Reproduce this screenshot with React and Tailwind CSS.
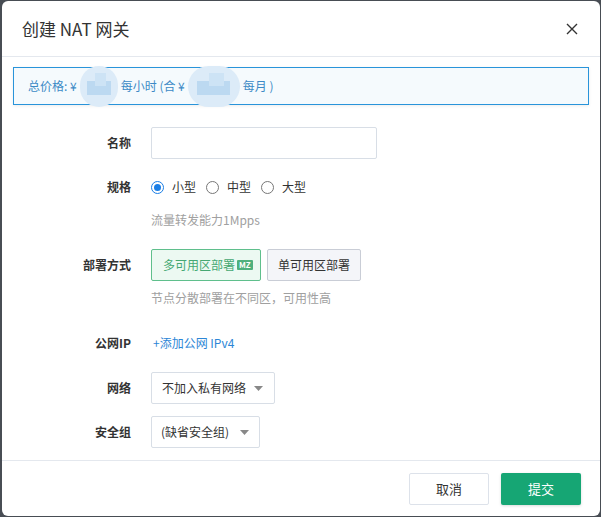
import React from 'react';

const font = { fontFamily: '"Noto Sans CJK SC", "Noto Sans", sans-serif' };

const Blob = ({ w }) => (
    <span className={`relative inline-block align-middle h-[41px] -my-[12px] mx-[3px] rounded-full bg-[#dcebf8] ${w}`}>
        <span className="absolute left-[18%] right-[18%] top-[38%] bottom-[28%] bg-[#bcd9f1]" />
        <span className="absolute left-[40%] right-[30%] top-[18%] bottom-[50%] bg-[#cde3f5]" />
    </span>
);

const Radio = ({ checked, label }) => (
    <label className="flex items-center gap-[8px] text-[12px] text-[#333]">
        <span className={`w-[13px] h-[13px] rounded-full border flex items-center justify-center ${checked ? 'border-[#1a7ee6]' : 'border-[#777]'}`}>
            {checked && <span className="w-[7px] h-[7px] rounded-full bg-[#1a7ee6]" />}
        </span>
        {label}
    </label>
);

const Caret = () => (
    <svg width="9" height="5" viewBox="0 0 9 5"><path d="M0 0h9L4.5 5z" fill="#888" /></svg>
);

const Row = ({ label, className = '', children }) => (
    <div className={`flex items-center ${className}`}>
        <div className="w-[129px] text-right text-[12px] font-bold text-[#333]">{label}</div>
        <div className="ml-[20px] flex items-center">{children}</div>
    </div>
);

const Hint = ({ className = '', children }) => (
    <div className={`ml-[149px] text-[12px] leading-[18px] text-[#a0a0a0] ${className}`}>{children}</div>
);

export default function App() {
    return (
        <div className="w-[601px] h-[517px] bg-[#484d54] pt-[1px] pl-[2px] overflow-hidden" style={font}>
            <div className="w-[598px] h-[515px] bg-white rounded-[6px] flex flex-col">
                <div className="h-[56px] flex items-center justify-between pl-[20px] pr-[20px] border-b border-[#e4e8ee]">
                    <h1 className="text-[17px] text-[#333]">创建 NAT 网关</h1>
                    <svg width="12" height="12" viewBox="0 0 12 12" className="mr-[2px]">
                        <path d="M1 1l10 10M11 1L1 11" stroke="#333" strokeWidth="1.4" />
                    </svg>
                </div>

                <div className="mt-[10px] mx-[11px] h-[38px] border border-[#2994da] bg-[#f5fafd] flex items-center pl-[14px] text-[12px] text-[#3c8ac6] shadow-[0_1px_3px_rgba(0,0,0,0.08)]">
                    <span>总价格: ¥</span>
                    <Blob w="w-[38px]" />
                    <span>每小时 (合 ¥</span>
                    <Blob w="w-[52px]" />
                    <span>每月 )</span>
                </div>

                <Row label="名称" className="mt-[22px]">
                    <input className="w-[226px] h-[32px] border border-[#d8dee6] rounded-[2px] outline-none" />
                </Row>

                <Row label="规格" className="mt-[18px] h-[20px]">
                    <div className="flex items-center gap-[10px]">
                        <Radio checked label="小型" />
                        <Radio label="中型" />
                        <Radio label="大型" />
                    </div>
                </Row>
                <Hint className="mt-[14px]">流量转发能力1Mpps</Hint>

                <Row label="部署方式" className="mt-[20px]">
                    <button className="h-[32px] w-[110px] border border-[#5fbf8c] bg-[#ecf9f2] rounded-[2px] text-[12px] text-[#45a873] flex items-center pl-[11px] gap-[2px]">
                        多可用区部署
                        <span className="bg-[#4fb07d] text-white text-[8px] font-bold leading-[10px] px-[2px] rounded-[1px]">MZ</span>
                    </button>
                    <button className="ml-[6px] h-[32px] w-[94px] border border-[#c9cdd6] bg-[#f4f5f9] rounded-[2px] text-[12px] text-[#333]">单可用区部署</button>
                </Row>
                <Hint className="mt-[8px]">节点分散部署在不同区，可用性高</Hint>

                <Row label="公网IP" className="mt-[26px] h-[20px]">
                    <span className="ml-[2px] text-[12px] text-[#2c86d6]">+添加公网 IPv4</span>
                </Row>

                <Row label="网络" className="mt-[19px]">
                    <div className="w-[124px] h-[32px] border border-[#d8dee6] rounded-[2px] flex items-center justify-between pl-[10px] pr-[11px] text-[12px] text-[#333]">
                        不加入私有网络 <Caret />
                    </div>
                </Row>

                <Row label="安全组" className="mt-[12px]">
                    <div className="w-[109px] h-[32px] border border-[#d8dee6] rounded-[2px] flex items-center justify-between pl-[9px] pr-[10px] text-[12px] text-[#333]">
                        (缺省安全组) <Caret />
                    </div>
                </Row>

                <div className="mt-[12px] border-t border-[#e4e8ee] flex justify-end gap-[12px] pt-[12px] pr-[19px]">
                    <button className="w-[80px] h-[32px] border border-[#dde2ea] rounded-[2px] bg-white text-[13px] text-[#333]">取消</button>
                    <button className="w-[80px] h-[32px] rounded-[2px] bg-[#16a674] text-[13px] text-white shadow-[0_1px_3px_rgba(0,0,0,0.15)]">提交</button>
                </div>
            </div>
        </div>
    );
}
